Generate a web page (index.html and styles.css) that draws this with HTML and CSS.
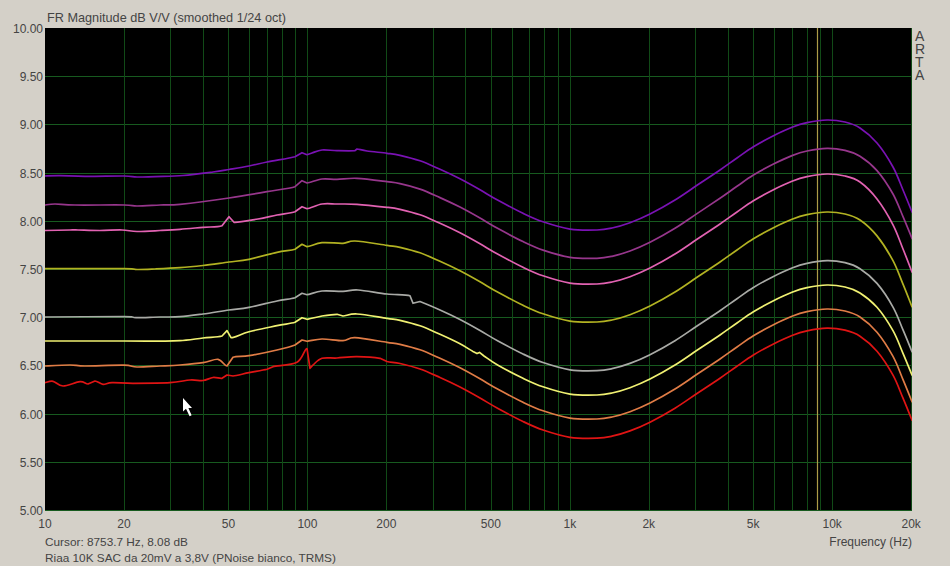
FILE: index.html
```html
<!DOCTYPE html>
<html lang="en">
  <head>
    <meta charset="UTF-8" />
    <title>FR Magnitude</title>
    <link rel="stylesheet" href="styles.css">
  </head>
  <body>
    <div class="chart-window">
      <div class="chart-title">FR Magnitude dB V/V (smoothed 1/24 oct)</div>

      <div class="y-axis">
        <span>10.00</span>
        <span>9.50</span>
        <span>9.00</span>
        <span>8.50</span>
        <span>8.00</span>
        <span>7.50</span>
        <span>7.00</span>
        <span>6.50</span>
        <span>6.00</span>
        <span>5.50</span>
        <span>5.00</span>
      </div>

      <svg id="plot" class="plot" viewBox="45 28 867 483" xmlns="http://www.w3.org/2000/svg">
        <g id="grid"></g>
        <g id="curves"></g>
        <!-- mouse pointer caught in the capture -->
        <path class="pointer" d="M183 398 L183 411.5 L186 408.8 L189.6 416.2 L191.6 415.2 L188.4 408 L192 408 Z" />
      </svg>

      <div class="arta">A R T A</div>

      <div id="x-axis" class="x-axis"></div>

      <div class="chart-footer">
        <div class="footer-row">
          <span class="footer-note">Cursor: 8753.7 Hz, 8.08 dB</span>
          <span>Frequency (Hz)</span>
        </div>
        <div class="footer-row">
          <span class="footer-note">Riaa 10K SAC da 20mV a 3,8V (PNoise bianco, TRMS)</span>
        </div>
      </div>
    </div>

    <script src="chart.js"></script>
  </body>
</html>
```

FILE: styles.css
```css
* {
  margin: 0;
  padding: 0;
  box-sizing: border-box;
}

body {
  font-family: "Liberation Sans", Arial, sans-serif;
  font-size: 12px;
  color: #444;
  background: #d4d0c8;
  height: 566px;
  overflow: hidden;
}

.chart-window {
  display: grid;
  grid-template-columns: 45px 867px 38px;
  grid-template-rows: 28px 483px 21px 35px;
}

.chart-title {
  grid-column: 2 / 4;
  padding: 11px 0 0 2px;
  font-size: 12.7px;
  line-height: 14px;
}

.y-axis {
  display: flex;
  flex-direction: column;
  justify-content: space-between;
  align-items: flex-end;
  padding-right: 2px;
  margin: -6px 0 -7px;
  line-height: 14px;
}

.plot {
  display: block;
  width: 867px;
  height: 483px;
  background: #000;
}

.grid-line {
  stroke: #114a17;
  stroke-width: 1;
}

.grid-line.horizontal {
  stroke: #175a1f;
}

.cursor-line {
  stroke: #ad9c48;
  stroke-width: 1.2;
}

.curve {
  fill: none;
  stroke-width: 1.7;
  stroke-linejoin: round;
  stroke-linecap: round;
}

.pointer {
  fill: #fff;
}

.arta {
  width: 16px;
  margin-left: 3px;
  padding-top: 2px;
  font-size: 14px;
  line-height: 13px;
}

.x-axis {
  grid-column: 2;
  grid-row: 3;
  position: relative;
}

.x-label {
  position: absolute;
  top: 6px;
  line-height: 14px;
  transform: translateX(-50%);
}

.chart-footer {
  grid-column: 2;
  grid-row: 4;
  display: flex;
  flex-direction: column;
  gap: 2px;
  padding-top: 3px;
  line-height: 14px;
}

.footer-row {
  display: flex;
  justify-content: space-between;
}

.footer-note {
  font-size: 11.8px;
}
```

FILE: chart.js
```js
const SVG_NS = "http://www.w3.org/2000/svg";

// plot area in page pixels
const LEFT = 45;
const RIGHT = 912;
const TOP = 28;
const BOTTOM = 510;
const DECADE = 262.4;

function freqToX(f) {
  return LEFT + DECADE * Math.log10(f / 10);
}

function addLine(parent, x1, y1, x2, y2, className) {
  const line = document.createElementNS(SVG_NS, "line");
  line.setAttribute("x1", x1);
  line.setAttribute("y1", y1);
  line.setAttribute("x2", x2);
  line.setAttribute("y2", y2);
  line.setAttribute("class", className);
  parent.appendChild(line);
}

// Grid
const grid = document.getElementById("grid");
for (let i = 1; i <= 10; i++) {
  const y = Math.round(TOP + i * 48.2) + 0.5;
  addLine(grid, LEFT, y, RIGHT, y, "grid-line horizontal");
}
for (let decade = 10; decade <= 10000; decade *= 10) {
  for (let m = 1; m <= 9; m++) {
    if (decade === 10 && m === 1) continue;
    const x = Math.round(freqToX(decade * m)) + 0.5;
    addLine(grid, x, TOP, x, BOTTOM, "grid-line");
  }
}
addLine(grid, Math.round(freqToX(10000)) + 0.5, TOP, Math.round(freqToX(10000)) + 0.5, BOTTOM, "grid-line");
addLine(grid, 817.5, TOP, 817.5, BOTTOM, "cursor-line");

// Frequency labels
const xAxis = document.getElementById("x-axis");
[
  [10, "10"],
  [20, "20"],
  [50, "50"],
  [100, "100"],
  [200, "200"],
  [500, "500"],
  [1000, "1k"],
  [2000, "2k"],
  [5000, "5k"],
  [10000, "10k"],
  [20000, "20k"],
].forEach(([f, text]) => {
  const label = document.createElement("span");
  label.className = "x-label";
  label.textContent = text;
  label.style.left = freqToX(f) - LEFT + "px";
  xAxis.appendChild(label);
});

// Above 200 Hz all the traces have the same shape, only shifted: [x, offset from base]
const TAIL = [
  [387, 0], [400, 2], [420, 7.5], [440, 16], [460, 25.5], [480, 36.5], [498, 47], [523, 60], [543, 68.5], [570, 75.8],
  [597, 76.7], [612, 74.7], [630, 69.4], [650, 60.7], [675, 46.7], [697, 32], [720, 16.7], [737, 4.7], [753, -6.3],
  [773, -17.3], [792, -26], [807, -30.6], [827, -33.3], [845, -31.3], [860, -25.3], [877, -10.3], [893, 13.7], [903, 36.7],
  [912, 58.7],
];

// head: traced [x, y] up to the tail, kinks: small glitches on the tail, drop: extra fall at the 20k end
const curves = [
  {
    color: "#7a12b4",
    base: 153.3,
    drop: 0,
    head: [
      [45, 176], [60, 175.6], [85, 176.4], [124, 176], [137, 177], [155, 176.6], [183, 175.5], [213, 172], [229, 169.5],
      [249, 166], [267, 162], [295, 156.7], [302, 152.7], [307, 154.7], [312, 153], [322, 150], [337, 150.7], [355, 150.7],
      [357, 149], [367, 151],
    ],
  },
  {
    color: "#97368c",
    base: 181.6,
    drop: -2,
    head: [
      [45, 205], [55, 204], [75, 205], [124, 205], [137, 206], [160, 205], [180, 204.3], [229, 198], [267, 191.7], [295, 186.7],
      [302, 180.7], [307, 183], [322, 179], [337, 179.3], [357, 178.3],
    ],
  },
  {
    color: "#e262b2",
    base: 207.3,
    drop: 6,
    head: [
      [45, 230.5], [70, 230], [78, 230], [100, 230.5], [122, 230], [137, 231.5], [160, 230.5], [180, 229.3], [203, 227.3],
      [222, 225.7], [229, 216.7], [234, 222.3], [258, 219], [277, 215], [295, 211.7], [302, 206.7], [307, 208.7], [322, 204],
      [337, 204], [357, 204.3],
    ],
  },
  {
    color: "#b2b222",
    base: 245.3,
    drop: 2.7,
    head: [
      [45, 268.7], [124, 268.7], [137, 269.5], [155, 269], [180, 267.7], [203, 265.5], [229, 262], [249, 259.3], [277, 252.3],
      [295, 249.3], [302, 244.3], [307, 246.7], [322, 242.7], [343, 243.3], [355, 241],
    ],
  },
  {
    color: "#a9aaa6",
    base: 294,
    drop: -1,
    head: [
      [45, 317], [124, 316.7], [136, 317.6], [160, 317], [180, 316.7], [203, 314], [229, 310], [249, 307.3], [277, 301],
      [295, 297.7], [302, 293.3], [307, 294.7], [322, 291], [343, 291.3], [358, 290], [387, 294], [410, 295.7], [413, 303.3],
      [418, 302],
    ],
  },
  {
    color: "#f0f072",
    base: 318.3,
    drop: -2,
    kinks: [[473, 351.5], [477, 353.6], [479.5, 352.4], [484, 356]],
    head: [
      [45, 341], [124, 341], [160, 341.2], [180, 340.7], [203, 338], [222, 336], [227, 330.7], [231, 337.7], [249, 331.7],
      [277, 325.7], [295, 322.3], [302, 317.7], [307, 319.3], [322, 316], [337, 314.3], [343, 316], [357, 314],
    ],
  },
  {
    color: "#e07c46",
    base: 342.3,
    drop: 0.7,
    head: [
      [45, 366], [70, 365], [85, 366], [124, 365.2], [137, 367], [160, 366], [180, 365], [203, 362.7], [218, 359.3], [227, 366],
      [233, 357.3], [249, 355.7], [277, 350], [295, 345], [302, 340], [307, 341.3], [322, 339], [343, 340.7], [355, 337.7],
    ],
  },
  {
    color: "#e01414",
    base: 361.5,
    drop: 0,
    head: [
      [45, 382.7], [53, 381.3], [63, 386], [80, 381.7], [88, 384], [95, 381], [103, 384.3], [112, 382.7], [133, 383.3],
      [170, 382.7], [190, 380], [203, 380.5], [213, 377.5], [222, 378.3], [227, 375], [233, 376], [249, 372.7], [267, 369.3],
      [273, 366.7], [297, 362.3], [307, 348.7], [310, 368.3], [313, 365], [322, 358.3], [337, 358], [357, 356.7], [380, 358.3],
    ],
  },
];

function buildPoints(curve) {
  const lastHead = curve.head[curve.head.length - 1][0];
  const kinks = curve.kinks || [];
  const tail = TAIL.filter(([x]) => x > lastHead && !kinks.some((k) => Math.abs(k[0] - x) < 8)).map(([x, offset]) => {
    const shift = x > 860 ? (curve.drop * (x - 860)) / 52 : 0;
    return [x, curve.base + offset + shift];
  });
  return curve.head.concat(tail, kinks).sort((a, b) => a[0] - b[0]);
}

// Catmull-Rom through the points, straight on very short segments so spikes don't overshoot
function smoothPath(points) {
  let d = `M${points[0][0]} ${points[0][1]}`;
  for (let i = 0; i < points.length - 1; i++) {
    const p0 = points[Math.max(i - 1, 0)];
    const p1 = points[i];
    const p2 = points[i + 1];
    const p3 = points[Math.min(i + 2, points.length - 1)];
    const k = p2[0] - p1[0] < 8 ? 0 : 1 / 6;
    const c1x = p1[0] + (p2[0] - p0[0]) * k;
    const c1y = p1[1] + (p2[1] - p0[1]) * k;
    const c2x = p2[0] - (p3[0] - p1[0]) * k;
    const c2y = p2[1] - (p3[1] - p1[1]) * k;
    d += ` C${c1x.toFixed(1)} ${c1y.toFixed(1)} ${c2x.toFixed(1)} ${c2y.toFixed(1)} ${p2[0]} ${p2[1].toFixed(1)}`;
  }
  return d;
}

const curvesGroup = document.getElementById("curves");
curves.forEach((curve) => {
  const path = document.createElementNS(SVG_NS, "path");
  path.setAttribute("class", "curve");
  path.setAttribute("stroke", curve.color);
  path.setAttribute("d", smoothPath(buildPoints(curve)));
  curvesGroup.appendChild(path);
});
```
